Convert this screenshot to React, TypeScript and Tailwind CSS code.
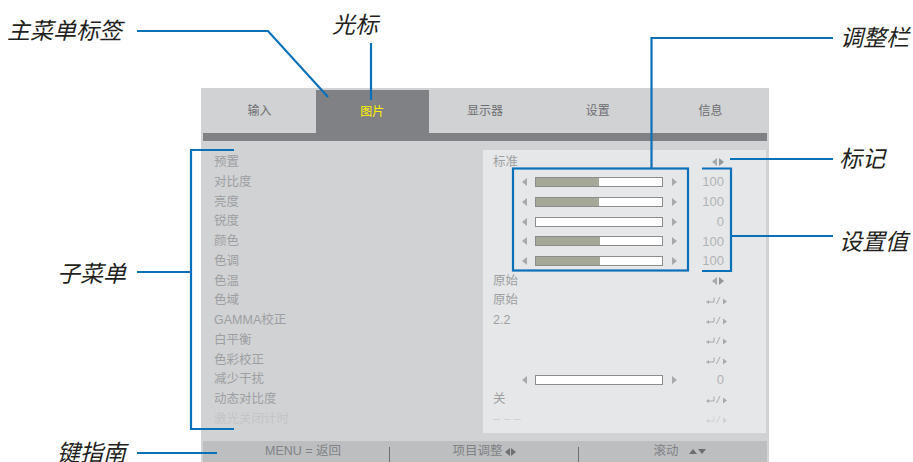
import React from 'react';

type Row = {
  label: string;
  value?: string;
  slider?: number;
  num?: string;
  mark?: 'lr' | 'enter';
  dim?: boolean;
};

const ROWS: Row[] = [
  { label: '预置', value: '标准', mark: 'lr' },
  { label: '对比度', slider: 50, num: '100' },
  { label: '亮度', slider: 50, num: '100' },
  { label: '锐度', slider: 0, num: '0' },
  { label: '颜色', slider: 51, num: '100' },
  { label: '色调', slider: 51, num: '100' },
  { label: '色温', value: '原始', mark: 'lr' },
  { label: '色域', value: '原始', mark: 'enter' },
  { label: 'GAMMA校正', value: '2.2', mark: 'enter' },
  { label: '白平衡', mark: 'enter' },
  { label: '色彩校正', mark: 'enter' },
  { label: '减少干扰', slider: 0, num: '0' },
  { label: '动态对比度', value: '关', mark: 'enter' },
  { label: '激光关闭计时', value: '– – –', mark: 'enter', dim: true },
];

const TABS = ['输入', '图片', '显示器', '设置', '信息'];

const Tri = ({ dir, color = '#a7a9ac' }: { dir: 'l' | 'r' | 'u' | 'd'; color?: string }) => {
  if (dir === 'l' || dir === 'r') {
    return (
      <svg width="5" height="8" viewBox="0 0 5 8" className="shrink-0">
        <polygon points={dir === 'l' ? '5,0 5,8 0,4' : '0,0 0,8 5,4'} fill={color} />
      </svg>
    );
  }
  return (
    <svg width="8" height="5" viewBox="0 0 8 5" className="shrink-0">
      <polygon points={dir === 'u' ? '0,5 8,5 4,0' : '0,0 8,0 4,5'} fill={color} />
    </svg>
  );
};

const EnterMark = ({ color }: { color: string }) => (
  <svg width="23" height="9" viewBox="0 0 23 9" className="shrink-0">
    <polygon points="0,6 3,4 3,8" fill={color} />
    <path d="M3 6 H8 V1.5" stroke={color} strokeWidth="1" fill="none" />
    <path d="M10.5 8 L14 1" stroke={color} strokeWidth="1" fill="none" />
    <polygon points="17,2.5 17,8.5 21,5.5" fill={color} />
  </svg>
);

function Slider({ pct }: { pct: number }) {
  return (
    <div className="flex items-center">
      <Tri dir="l" />
      <div className="ml-[8px] w-[128px] h-[10px] border border-[#8a8c8e] bg-white">
        <div className="h-full bg-[#a5a897]" style={{ width: `${pct}%` }} />
      </div>
      <div className="ml-[9px]">
        <Tri dir="r" />
      </div>
    </div>
  );
}

function ValueRow({ row }: { row: Row }) {
  const c = row.dim ? '#cfd0d2' : '#a7a9ac';
  if (row.slider !== undefined) {
    return (
      <div className="h-[19.77px] flex items-center pl-[39px] pr-[42px]">
        <Slider pct={row.slider} />
        <span className="flex-1 text-right text-[13px] text-[#b1b3b6]">{row.num}</span>
      </div>
    );
  }
  return (
    <div className="h-[19.77px] flex items-center pl-[10px] pr-[37px]">
      <span className="flex-1 text-[12.5px]" style={{ color: row.dim ? '#cfd0d2' : '#9d9fa2' }}>
        {row.value}
      </span>
      <div className="w-[23px] flex justify-end">
        {row.mark === 'lr' ? (
          <div className="flex items-center gap-[2px] pr-[5px]">
            <Tri dir="l" color="#a7a9ac" />
            <Tri dir="r" color="#939598" />
          </div>
        ) : (
          <EnterMark color={c} />
        )}
      </div>
    </div>
  );
}

function Menu() {
  return (
    <div className="w-[568px] bg-[#d1d2d4] px-[2px]">
      <div className="h-[45px] flex">
        {TABS.map((t) =>
          t === '图片' ? (
            <div key={t} className="flex-1 mt-[2px] bg-[#808184] flex items-center justify-center text-[12px] text-[#fff200]">
              {t}
            </div>
          ) : (
            <div key={t} className="flex-1 flex items-center justify-center text-[12px] text-[#6d6e71]">
              {t}
            </div>
          )
        )}
      </div>
      <div className="h-[8px] bg-[#808184]" />
      <div className="h-[300px] flex">
        <div className="w-[280px] pl-[11px] pt-[11.5px]">
          {ROWS.map((r) => (
            <div
              key={r.label}
              className={`h-[19.77px] flex items-center text-[12.5px] ${r.dim ? 'text-[#c4c5c7]' : 'text-[#9d9fa2]'}`}
            >
              {r.label}
            </div>
          ))}
        </div>
        <div className="w-[283px] mt-[9px] mb-[8px] bg-[#e6e7e8] pt-[2.5px]">
          {ROWS.map((r) => (
            <ValueRow key={r.label} row={r} />
          ))}
        </div>
      </div>
      <div className="h-[21px] flex bg-[#bcbec0] text-[12.5px] text-[#808285]">
        <div className="w-[186px] flex items-center justify-center pl-[14px]">MENU = 返回</div>
        <div className="w-px h-[15px] mt-[6px] bg-[#6d6e71]" />
        <div className="w-[188px] flex items-center justify-center gap-[2px]">
          项目调整
          <span className="flex items-center gap-[1px]">
            <Tri dir="l" color="#6d6e71" />
            <Tri dir="r" color="#6d6e71" />
          </span>
        </div>
        <div className="w-px h-[15px] mt-[6px] bg-[#6d6e71]" />
        <div className="w-[187px] flex items-center justify-center gap-[10px] pl-[14px]">
          滚动
          <span className="flex items-center gap-[1px]">
            <Tri dir="u" color="#6d6e71" />
            <Tri dir="d" color="#6d6e71" />
          </span>
        </div>
      </div>
    </div>
  );
}

const CALLOUTS = [
  { text: '主菜单标签', cls: 'left-[7px] top-[14px]' },
  { text: '光标', cls: 'left-[332px] top-[8px]' },
  { text: '调整栏', cls: 'left-[840px] top-[21px]' },
  { text: '标记', cls: 'left-[839px] top-[142px]' },
  { text: '设置值', cls: 'left-[839px] top-[225px]' },
  { text: '子菜单', cls: 'left-[57px] top-[257px]' },
  { text: '键指南', cls: 'left-[57px] top-[436px]' },
];

export default function App() {
  return (
    <div className="relative w-[913px] h-[462px] bg-white overflow-hidden font-['Liberation_Sans','Noto_Sans_CJK_SC',sans-serif]">
      <div className="pt-[88px] pl-[201px]">
        <Menu />
      </div>

      {/* callout lines */}
      <svg className="absolute inset-0 pointer-events-none" width="913" height="462">
        <g stroke="#0a71b9" strokeWidth="2.2" fill="none">
          <polyline points="137,31 268,31 328,97" />
          <line x1="371" y1="43" x2="371" y2="100" />
          <polyline points="833,38 651.5,38 651.5,168" />
          <rect x="513" y="168.5" width="175" height="102" />
          <line x1="730" y1="159" x2="833" y2="159" />
          <polyline points="702,168.5 731,168.5 731,271 702,271" />
          <line x1="731" y1="236" x2="833" y2="236" />
          <polyline points="234,150 191,150 191,429 234,429" />
          <line x1="137" y1="272" x2="191" y2="272" />
          <line x1="137" y1="453" x2="217" y2="453" />
        </g>
      </svg>

      {CALLOUTS.map((c) => (
        <div
          key={c.text}
          className={`absolute ${c.cls} text-[23px] leading-[30px] italic text-[#231f20] font-['Noto_Sans_CJK_SC',sans-serif]`}
        >
          {c.text}
        </div>
      ))}
    </div>
  );
}
